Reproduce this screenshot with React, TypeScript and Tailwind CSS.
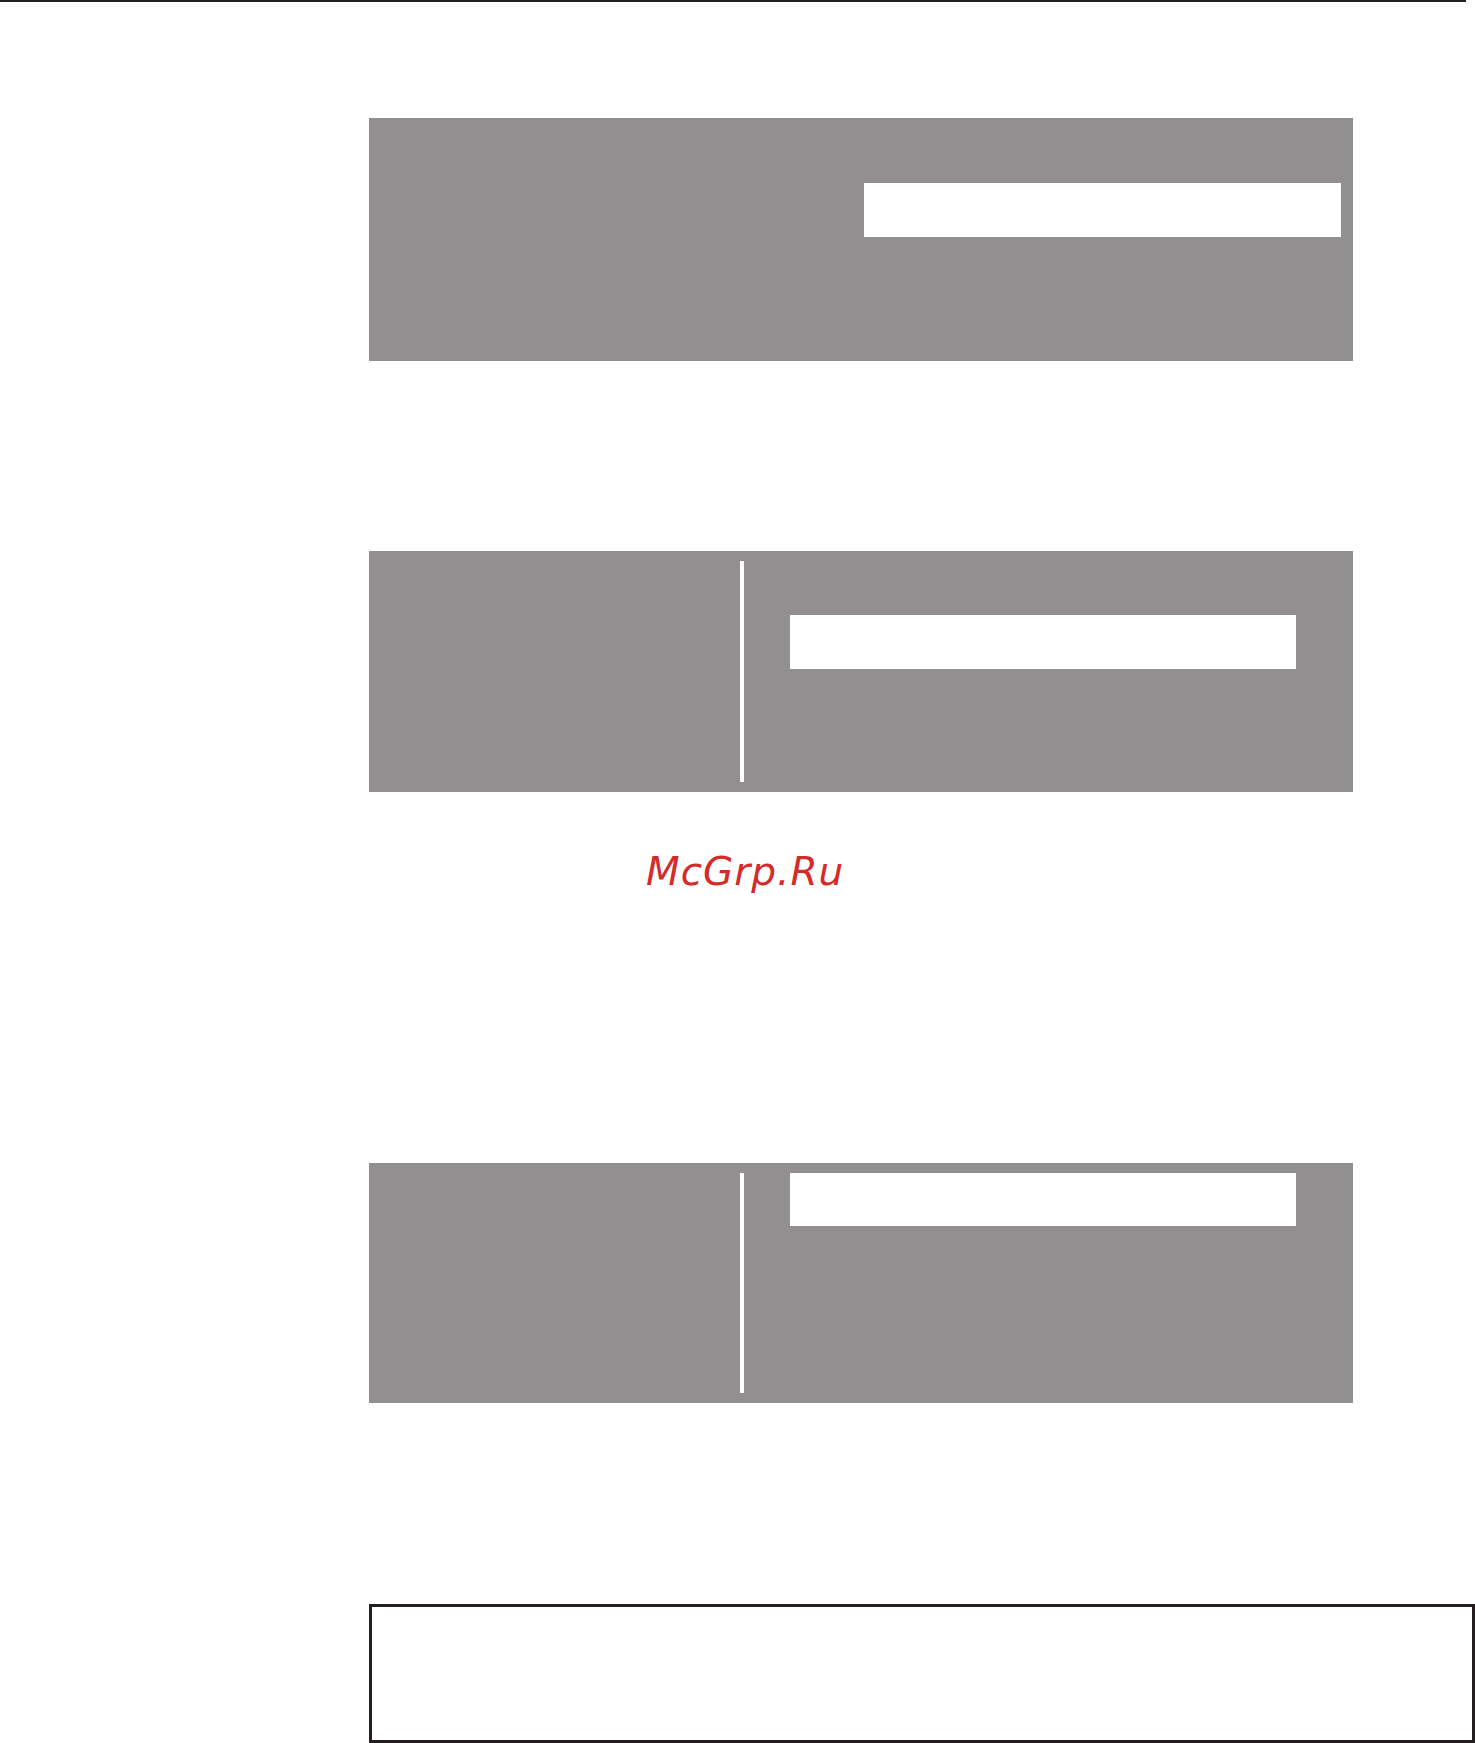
export default function App() {
  return (
    <div className="w-[1475px] h-[1743px] overflow-hidden bg-white flex flex-col">
      {/* rule across the top of the sheet */}
      <div className="h-[2px] w-[1466px] shrink-0 bg-[#231f20]" />

      <div className="ml-[369px] flex flex-col">
        {/* panel with one slot on the right */}
        <div className="mt-[116px] h-[243px] w-[984px] bg-[#918f90] flex justify-end items-start pt-[65px] pr-[12px]">
          <div className="w-[477px] h-[54px] bg-white" />
        </div>

        {/* split panel, slot sits mid-height */}
        <div className="mt-[190px] h-[241px] w-[984px] bg-[#918f90] flex items-stretch py-[10px]">
          <div className="w-[371px] shrink-0" />
          <div className="w-[4px] shrink-0 bg-white" />
          <div className="ml-[46px] pt-[54px]">
            <div className="w-[506px] h-[54px] bg-white" />
          </div>
        </div>

        <div
          className="mt-[60px] ml-[277px] h-[40px] leading-[40px] text-[39px] italic text-[#d42b2b] tracking-[1px]"
          style={{ fontFamily: '"DejaVu Sans", sans-serif' }}
        >
          McGrp.Ru
        </div>

        {/* split panel, slot at the top */}
        <div className="mt-[271px] h-[240px] w-[984px] bg-[#918f90] flex items-stretch py-[10px]">
          <div className="w-[371px] shrink-0" />
          <div className="w-[4px] shrink-0 bg-white" />
          <div className="ml-[46px]">
            <div className="w-[506px] h-[53px] bg-white" />
          </div>
        </div>

        {/* outlined box at the foot */}
        <div className="mt-[201px] h-[139px] w-[1106px] border-[3px] border-[#231f20]" />
      </div>
    </div>
  );
}
